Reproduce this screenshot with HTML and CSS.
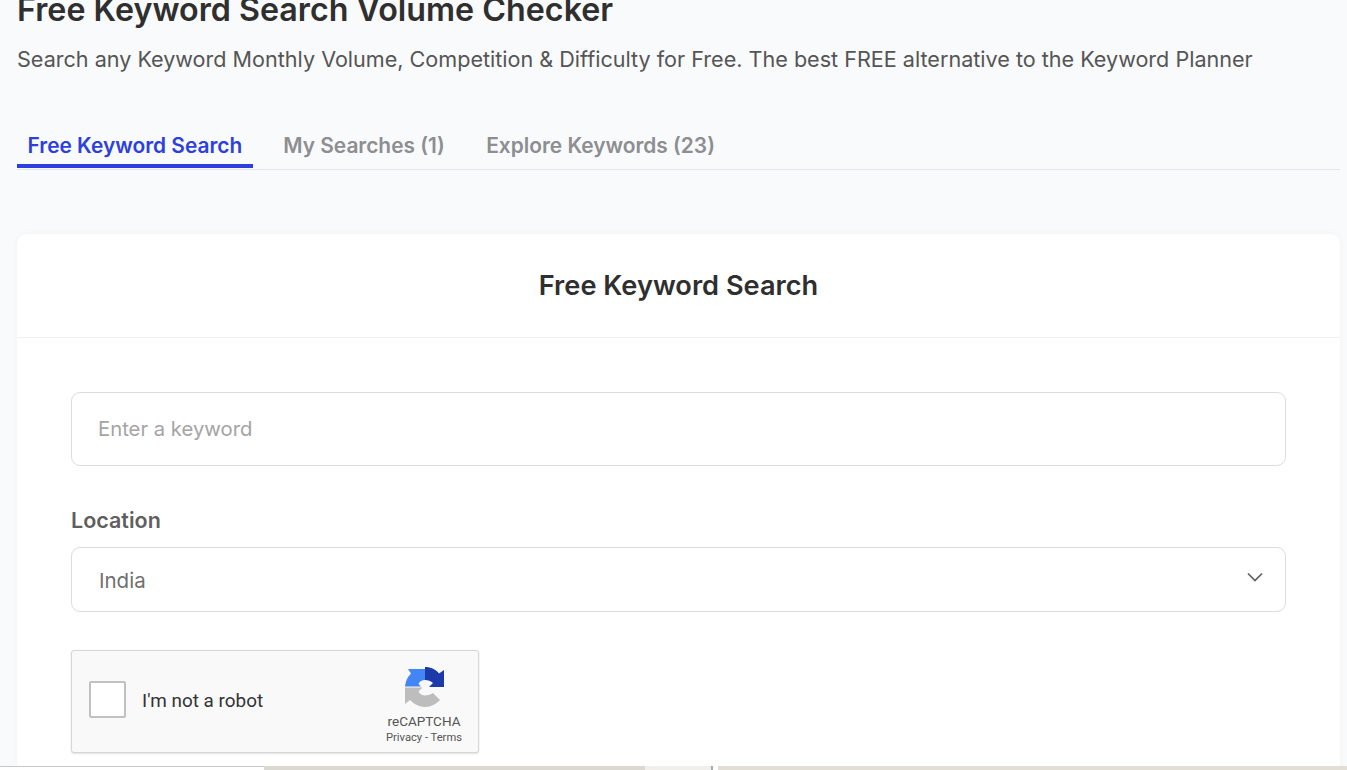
FILE: index.html
```html
<!DOCTYPE html>
<html lang="en">
<head>
<meta charset="utf-8">
<title>Free Keyword Search Volume Checker</title>
<link rel="stylesheet" href="styles.css">
</head>
<body>
<main class="page">
  <h1 class="title">Free Keyword Search Volume Checker</h1>
  <p class="subtitle">Search any Keyword Monthly Volume, Competition &amp; Difficulty for Free. The best FREE alternative to the Keyword Planner</p>
  <nav class="tabs">
    <a class="tab tab-active">Free Keyword Search</a>
    <a class="tab">My Searches (1)</a>
    <a class="tab">Explore Keywords (23)</a>
  </nav>
  <section class="card">
    <h2 class="card-title">Free Keyword Search</h2>
    <form class="card-body">
      <div class="field keyword"><span>Enter a keyword</span></div>
      <label class="label">Location</label>
      <div class="field select">
        <span>India</span>
        <svg class="chevron" width="16" height="10" viewBox="0 0 16 10"><path d="M1 1.500 8 8.500 15 1.500" fill="none" stroke="#5f5f5f" stroke-width="1.700"/></svg>
      </div>
      <div class="captcha">
        <span class="check"></span>
        <span class="robot">I'm not a robot</span>
        <div class="brand">
          <svg class="logo" width="40" height="40" viewBox="0 0 40 40">
            <path d="M0 19.500C0.500 14 2.500 10 6 6.500L3 2H20V13C17 13 14.500 14.500 13.500 17L16 19.500Z" fill="#4285f4"/>
            <path d="M20 0C26 0 31 2.500 34 6.500L39 3V20H24L28 16C26 14 23 13 20 13Z" fill="#1c3aa9"/>
            <path d="M0 20.500V37L5 33C9 37 14 40 20 40C26 40 31 37 35 33L28 26C26 27.500 23 28.500 20 28.500C17 28.500 15 27 13.500 24.500L17.500 20.500Z" fill="#bdbdbd"/>
          </svg>
          <span class="brand-name">reCAPTCHA</span>
          <span class="brand-links">Privacy - Terms</span>
        </div>
      </div>
    </form>
  </section>
</main>
<div class="strip">
  <span class="strip-a"></span><span class="strip-b"></span><span class="strip-c"></span><span class="strip-d"></span><span class="strip-e"></span>
</div>
</body>
</html>
```
FILE: styles.css
```css
* { box-sizing: border-box; }
html, body { margin: 0; height: 770px; overflow: hidden; }
body { background: #f9fafc; font-family: Inter, "Liberation Sans", sans-serif; position: relative; }
.page { padding: 0 7px 0 17px; }
.title { margin: -9px 0 0; font-size: 32.250px; line-height: 38px; font-weight: 600; color: #2f2f2f; white-space: nowrap; }
.subtitle { margin: 16px 0 0; font-size: 21.590px; line-height: 28px; font-weight: 400; color: #555; white-space: nowrap; }
.tabs { display: flex; gap: 19.500px; margin-top: 47px; height: 50px; border-bottom: 1px solid #e6e7ea; }
.tab { padding: 0 11px; height: 48px; line-height: 52px; font-size: 20.900px; font-weight: 600; color: #8d8e91; }
.tab-active { color: #2d3fdc; border-bottom: 4px solid #2d3fdc; padding: 0 10.500px; }
.card { margin-top: 64px; height: 560px; background: #fff; border-radius: 10px; box-shadow: 0 0 8px rgba(0,0,0,.03); }
.card-title { margin: 0; height: 104px; line-height: 103px; text-align: center; font-size: 27.200px; font-weight: 600; color: #2f2f2f; border-bottom: 1px solid #eeeff1; }
.card-body { padding: 54px 54px 0; }
.field { border: 1px solid #dcdde0; border-radius: 9px; color: #a4a4a4; font-size: 20.300px; padding-left: 26px; display: flex; align-items: center; }
.keyword { height: 74px; }
.keyword span { margin-top: -2px; }
.label { display: block; margin-top: 40px; font-size: 21.500px; line-height: 28px; font-weight: 600; color: #5f5f5f; }
.select { height: 65px; margin-top: 13px; padding: 0 22px 0 27px; justify-content: space-between; color: #707070; font-size: 20.500px; }
.select span { margin-top: 2px; }
.chevron { margin-top: -5px; }
.captcha { margin-top: 38px; width: 408px; height: 103px; background: #f9f9f9; border: 1px solid #d6d6d6; border-radius: 3px; box-shadow: 0 1px 2px rgba(0,0,0,.12); display: flex; align-items: flex-start; padding-left: 17px; font-family: Roboto, "Liberation Sans", sans-serif; }
.check { width: 37px; height: 37px; margin-top: 30px; background: #fff; border: 2px solid #c1c1c1; border-radius: 2px; }
.robot { margin: 39px 0 0 16px; font-size: 18.900px; line-height: 22px; color: #333; flex: 1; }
.brand { width: 90px; margin: 16px 9px 0 0; display: flex; flex-direction: column; align-items: center; color: #555; }
.logo { margin: 0 0 6px 2px; }
.brand-name { font-size: 13.500px; line-height: 16px; }
.brand-links { margin-top: 2px; font-size: 11.200px; line-height: 14px; white-space: nowrap; }
.strip { position: absolute; left: 0; right: 0; bottom: 0; height: 4px; display: flex; background: #dcd9d2; }
.strip-a { width: 264px; background: linear-gradient(#c8c8c8 0 1px, #fff 1px); }
.strip-b { width: 381px; background: #dbd8d1; }
.strip-c { width: 66px; background: #f0efec; }
.strip-d { width: 7px; background: linear-gradient(90deg, #a9a9a9 2px, #fff 2px); }
.strip-e { flex: 1; background: #e3ded5; }
```
